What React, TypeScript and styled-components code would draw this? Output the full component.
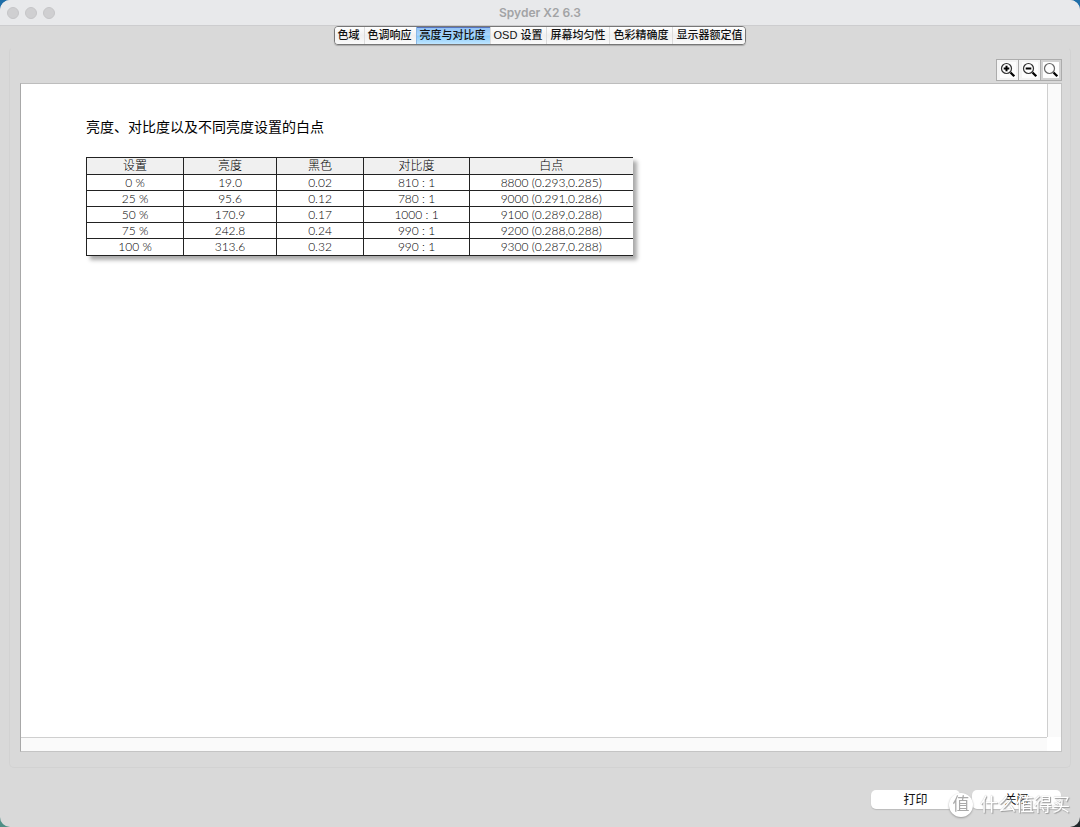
import React, { useState } from "react";
import styled, { createGlobalStyle, css } from "styled-components";

const ui = `"Liberation Sans", "Noto Sans CJK SC", sans-serif`;

const GlobalStyle = createGlobalStyle`
  *, *::before, *::after { box-sizing: border-box; }
  body { margin: 0; font-family: ${ui}; color: #111; }
`;

const Desktop = styled.div`
  background: linear-gradient(to right, #4f8f86, #22282b) bottom / 100% 40px no-repeat, #1f6ea8;
`;

const Window = styled.div`
  min-height: 100vh;
  display: flex;
  flex-direction: column;
  background: #d9d9d9;
  border-radius: 10px;
  overflow: hidden;
`;

const TitleBar = styled.header`
  flex: none;
  height: 26px;
  display: grid;
  grid-template-columns: 1fr auto 1fr;
  align-items: center;
  padding: 0 7px;
  background: #e8e9eb;
  border-bottom: 1px solid #cdcdcf;
`;

const Lights = styled.div`
  display: flex;
  gap: 6px;
`;

const Light = styled.span`
  width: 12px;
  height: 12px;
  border-radius: 50%;
  background: #cfcfd1;
  border: 1px solid #c5c5c7;
`;

const Title = styled.h1`
  margin: 0;
  font: 600 12px/24px Inter, sans-serif;
  color: #a2a3a5;
`;

const TabBar = styled.nav`
  align-self: center;
  display: flex;
  height: 19px;
  border: 1px solid #777;
  border-radius: 4px;
  overflow: hidden;
  box-shadow: 0 1px 1px #aaa;
`;

const Tab = styled.button<{ $active: boolean }>`
  padding: 0 4px 0 3px;
  border: 0;
  border-left: 1px solid #dcdcdc;
  background: linear-gradient(#fff, #f0f0f0 50%, #fafafa);
  font: 500 11px/17px ${ui};
  color: #111;
  white-space: nowrap;
  &:first-child { border-left: 0; }
  &:last-child { padding-right: 3px; }
  ${(p) =>
    p.$active &&
    css`
      background: linear-gradient(#8fc0f5, #a9d5fb 45%, #8ccbfa 55%, #bfe6ff);
      border-color: #8ab8e6;
      box-shadow: inset 0 1px #5674c0;
    `}
`;

const Group = styled.main`
  flex: 1;
  display: flex;
  flex-direction: column;
  margin: 2px 9px 0;
  padding: 11px 8px 15px 10px;
  border: 1px solid #d2d2d2;
  border-top-color: transparent;
  border-radius: 5px;
`;

const Tools = styled.div`
  align-self: flex-end;
  display: flex;
  height: 22px;
  margin-bottom: 2px;
  border: 1px solid #acacac;
`;

const Tool = styled.button<{ $pressed?: boolean }>`
  width: 22px;
  padding: 0;
  display: grid;
  place-items: center;
  border: 0;
  border-left: 1px solid #acacac;
  background: ${(p) => (p.$pressed ? "#d2d2d2" : "#f4f4f4")};
  &:first-child { border-left: 0; width: 21px; }
  &:last-child { width: 21px; }
  svg { display: block; background: #fdfdfd; }
`;

const Viewer = styled.div`
  flex: 1;
  display: grid;
  grid-template-columns: 1fr 14px;
  grid-template-rows: 1fr 14px;
  border: 1px solid #a8a8a8;
  border-top-color: #bdbdbd;
  border-bottom-color: #c4c4c4;
  border-right-color: #c4c4c4;
`;

const Page = styled.section`
  padding: 33px 65px;
  background: #fff;
`;

const Track = styled.div<{ $side: "right" | "bottom" }>`
  background: #fafafa;
  border: 0 solid #cfcfcf;
  ${(p) => (p.$side === "right" ? "border-left-width: 1px;" : "border-top-width: 1px;")}
`;

const Corner = styled.div`
  background: #fff;
`;

const Heading = styled.h2`
  margin: 0 0 20px;
  font: 400 14px/20px ${ui};
  color: #000;
`;

const Table = styled.table`
  width: 546px;
  table-layout: fixed;
  border-collapse: collapse;
  background: #fff;
  box-shadow: 4px 4px 4px #aaa;
  font: 300 12px/15px Lato, "Noto Sans CJK SC", sans-serif;
  color: #000;
  text-align: center;
  th, td {
    padding: 0;
    border: 1px solid #222;
    border-right: 0;
    font-weight: 300;
  }
  th {
    background: #f0f0f0;
    line-height: 16px;
  }
  tr:last-child td { line-height: 16px; }
`;

const Footer = styled.footer`
  flex: none;
  display: flex;
  justify-content: flex-end;
  gap: 12px;
  padding: 22px 19px 18px;
`;

const PushButton = styled.button`
  width: 89px;
  height: 19px;
  padding: 0;
  border: 0;
  border-radius: 5px;
  background: #fff;
  box-shadow: 0 1px 1px #bbb;
  font: 400 12px/18px ${ui};
  color: #111;
`;

const Watermark = styled.div`
  position: fixed;
  right: 10px;
  bottom: 9px;
  display: flex;
  align-items: center;
  gap: 7px;
  pointer-events: none;
  font: 400 18px/26px ${ui};
  color: #fff;
  text-shadow: 1px 1px 1px #999, 0 0 1px #aaa;
`;

const Seal = styled.span`
  width: 24px;
  height: 24px;
  border-radius: 50%;
  background: #fff;
  box-shadow: 0 1px 2px #999;
  font-size: 17px;
  line-height: 23px;
  text-align: center;
  color: #aaa;
  text-shadow: none;
`;

const tabs = ["色域", "色调响应", "亮度与对比度", "OSD 设置", "屏幕均匀性", "色彩精确度", "显示器额定值"];

const columns = [
  { name: "设置", width: 97 },
  { name: "亮度", width: 93 },
  { name: "黑色", width: 87 },
  { name: "对比度", width: 106 },
  { name: "白点", width: 163 },
];

const rows = [
  ["0 %", "19.0", "0.02", "810 : 1", "8800 (0.293,0.285)"],
  ["25 %", "95.6", "0.12", "780 : 1", "9000 (0.291,0.286)"],
  ["50 %", "170.9", "0.17", "1000 : 1", "9100 (0.289,0.288)"],
  ["75 %", "242.8", "0.24", "990 : 1", "9200 (0.288,0.288)"],
  ["100 %", "313.6", "0.32", "990 : 1", "9300 (0.287,0.288)"],
];

function Magnifier({ sign }: { sign?: "plus" | "minus" }) {
  return (
    <svg width="16" height="16" viewBox="0 0 16 16" fill="none" aria-hidden="true">
      <circle cx="6.5" cy="6.5" r="5" stroke={sign ? "#333" : "#666"} strokeWidth="1.2" />
      <path d="M10.5 10.5L14.3 14.3" stroke="#000" strokeWidth="2.3" />
      {sign && <path d="M3.7 6.5H9.3" stroke="#000" strokeWidth="2" />}
      {sign === "plus" && <path d="M6.5 3.7V9.3" stroke="#000" strokeWidth="2" />}
    </svg>
  );
}

export default function App() {
  const [active, setActive] = useState(2);
  return (
    <Desktop>
      <GlobalStyle />
      <Window>
        <TitleBar>
          <Lights>
            <Light />
            <Light />
            <Light />
          </Lights>
          <Title>Spyder X2 6.3</Title>
        </TitleBar>
        <TabBar>
          {tabs.map((t, i) => (
            <Tab key={t} type="button" $active={i === active} onClick={() => setActive(i)}>
              {t}
            </Tab>
          ))}
        </TabBar>
        <Group>
          <Tools>
            <Tool type="button" aria-label="放大"><Magnifier sign="plus" /></Tool>
            <Tool type="button" aria-label="缩小"><Magnifier sign="minus" /></Tool>
            <Tool type="button" aria-label="实际大小" $pressed><Magnifier /></Tool>
          </Tools>
          <Viewer>
            <Page>
              <Heading>亮度、对比度以及不同亮度设置的白点</Heading>
              <Table>
                <colgroup>
                  {columns.map((c) => <col key={c.name} width={c.width} />)}
                </colgroup>
                <thead>
                  <tr>{columns.map((c) => <th key={c.name} scope="col">{c.name}</th>)}</tr>
                </thead>
                <tbody>
                  {rows.map((r) => (
                    <tr key={r[0]}>{r.map((v, i) => <td key={i}>{v}</td>)}</tr>
                  ))}
                </tbody>
              </Table>
            </Page>
            <Track $side="right" />
            <Track $side="bottom" />
            <Corner />
          </Viewer>
        </Group>
        <Footer>
          <PushButton type="button">打印</PushButton>
          <PushButton type="button">关闭</PushButton>
        </Footer>
      </Window>
      <Watermark>
        <Seal>值</Seal>
        <span>什么值得买</span>
      </Watermark>
    </Desktop>
  );
}
